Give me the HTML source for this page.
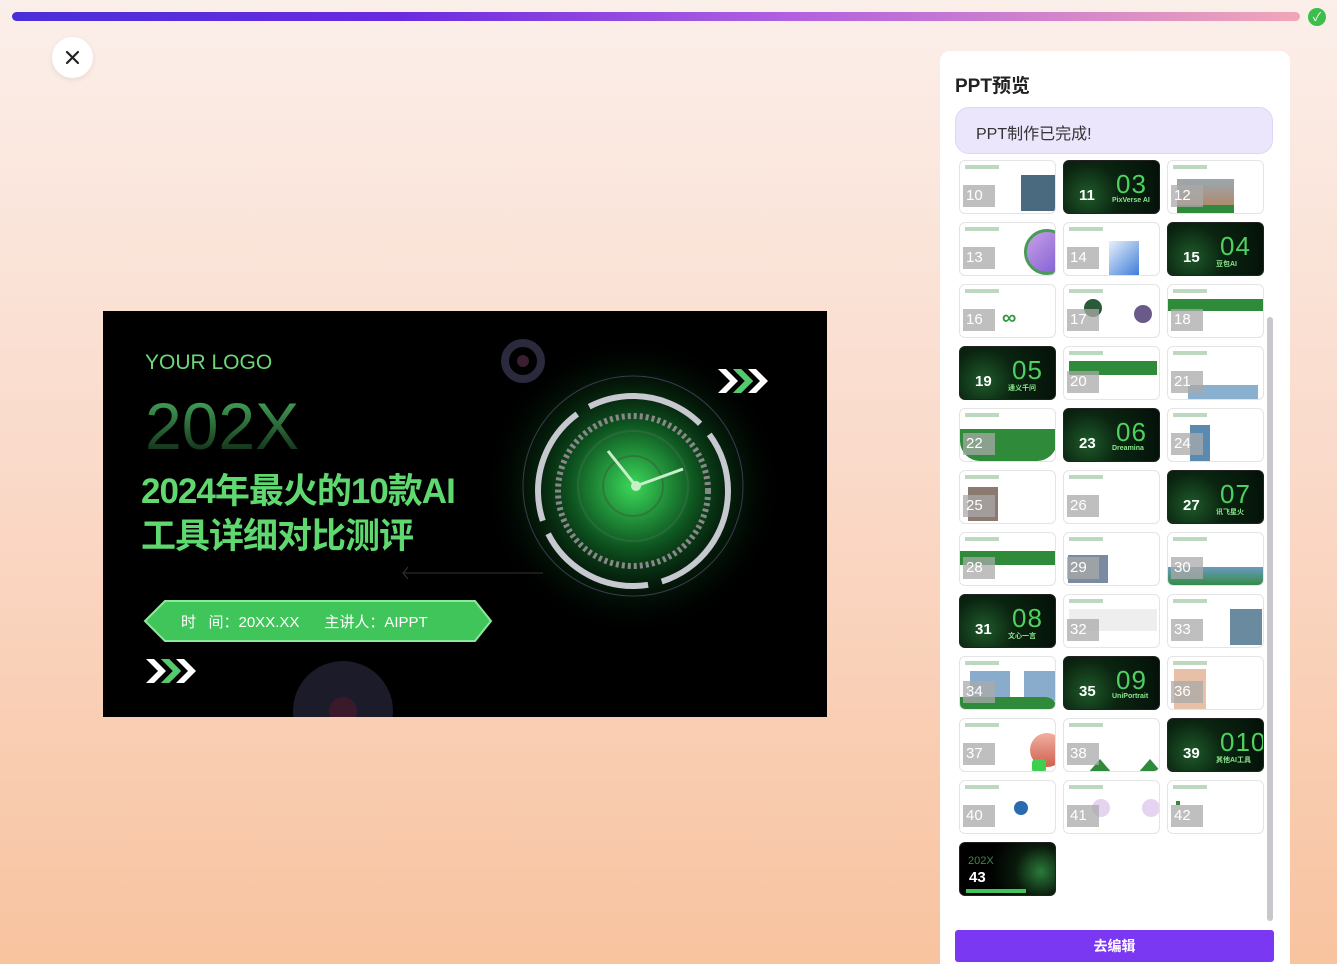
<!DOCTYPE html>
<html style="width:1337px;height:964px;overflow:hidden"><head><meta charset="utf-8"><style>
*{margin:0;padding:0;box-sizing:border-box}
html{background:linear-gradient(180deg,#fbefea 0%,#fad9c8 50%,#f8c39f 100%)}
body{width:1337px;height:964px;overflow:hidden;position:relative;font-family:"Liberation Sans","Noto Sans CJK SC",sans-serif;background:linear-gradient(180deg,#fbefea 0%,#fad9c8 50%,#f8c39f 100%)}
.bar{position:absolute;left:12px;top:12px;width:1288px;height:9px;border-radius:5px;background:linear-gradient(90deg,#4a2fd8 0%,#6a2be0 30%,#b060e0 60%,#f0a6b8 100%)}
.ok{position:absolute;left:1308px;top:8px;width:18px;height:18px;border-radius:50%;background:#3bbf4a;color:#fff;font-size:12px;text-align:center;line-height:18px}
.close{position:absolute;left:52px;top:37px;width:41px;height:41px;border-radius:50%;background:#fff;box-shadow:0 2px 6px rgba(0,0,0,.08)}
.slide{position:absolute;left:103px;top:311px;width:724px;height:406px;background:#000;overflow:hidden}
.panel{position:absolute;left:940px;top:51px;width:350px;height:913px;background:#fff;border-radius:10px 10px 0 0}
.title{position:absolute;left:955px;top:71px;font-size:19px;font-weight:bold;color:#222}
.msg{position:absolute;left:955px;top:107px;width:318px;height:47px;border-radius:14px;background:#ebe6fc;border:1px solid #ddd6f5;font-size:16px;color:#333;padding:12px 0 0 20px}
.grid{position:absolute;left:955px;top:158px;width:313px;height:765px;overflow:hidden}
.t{position:absolute;width:97px;height:54px;border-radius:6px;border:1px solid #e4e4e4;background:#fff;overflow:hidden}
.t .h{position:absolute;left:5px;top:4px;width:34px;height:4px;background:#bcd8bf}
.t .n{position:absolute;left:3px;top:24px;width:32px;height:22px;background:rgba(170,170,170,.75);color:#fff;font-size:15px;line-height:22px;padding-left:3px}
.t.d{background:radial-gradient(circle at 25% 65%,#1f5a2a 0,#0a2410 40%,#041008 100%);border-color:#222}
.t.d .n{background:none;color:#fff;left:12px;font-weight:bold}
.t .big{position:absolute;left:52px;top:10px;color:#4fd060;font-size:26px;line-height:26px;letter-spacing:1px}
.t .sub{position:absolute;left:48px;top:36px;color:#8be88f;font-size:7px;font-weight:bold}
.sb{position:absolute;left:1267px;top:317px;width:6px;height:604px;border-radius:3px;background:#c8c8cc}
.btn{position:absolute;left:955px;top:930px;width:319px;height:32px;border-radius:3px;background:#7a38f2;color:#fff;text-align:center;line-height:32px;font-size:14px;font-weight:bold}
</style></head><body>
<div class="bar"></div><div class="ok">✓</div>
<div class="close"><svg width="41" height="41"><path d="M15 15L26 26M26 15L15 26" stroke="#222" stroke-width="2.2" stroke-linecap="round"/></svg></div>
<div class="slide">
<svg width="724" height="406" style="position:absolute;left:0;top:0">
<defs><radialGradient id="g" cx="0.5" cy="0.5" r="0.5"><stop offset="0" stop-color="#3bd85a"/><stop offset="0.4" stop-color="#0f5a22"/><stop offset="1" stop-color="#000" stop-opacity="0"/></radialGradient>
<linearGradient id="y" x1="0" y1="0" x2="0" y2="1"><stop offset="0" stop-color="#4cb864"/><stop offset="1" stop-color="#0a1a0c"/></linearGradient></defs>
<circle cx="420" cy="50" r="18" fill="none" stroke="#2a2a3c" stroke-width="8"/><circle cx="420" cy="50" r="6" fill="#3a1f30"/>
<circle cx="240" cy="400" r="50" fill="#1b1b2a"/><circle cx="240" cy="400" r="14" fill="#3a1a2a"/>
<circle cx="530" cy="175" r="150" fill="url(#g)"/>
<circle cx="530" cy="175" r="110" fill="none" stroke="#3a3a50" stroke-width="1"/>
<circle cx="530" cy="180" r="95" fill="none" stroke="#c8c8d0" stroke-width="6" stroke-dasharray="120 14"/>
<circle cx="530" cy="180" r="75" fill="none" stroke="#888" stroke-width="6" stroke-dasharray="3 3"/>
<circle cx="530" cy="175" r="55" fill="none" stroke="#2a6a3a" stroke-width="2"/>
<circle cx="530" cy="175" r="30" fill="none" stroke="#2f7a3a" stroke-width="2"/>
<path d="M533 175L505 140M533 175L580 158" stroke="#c8f0c8" stroke-width="3"/>
<circle cx="533" cy="175" r="5" fill="#c8f0c8"/>
<path d="M300 262H440M305 256l-5 6 5 6" stroke="#333" fill="none"/>
<path d="M615 58l12 12-12 12h8l12-12-12-12zM630 58l12 12-12 12h8l12-12-12-12zM645 58l12 12-12 12h8l12-12-12-12z" fill="#fff"/>
<path d="M630 58l12 12-12 12h8l12-12-12-12z" fill="#52cc6a"/>
<path d="M43 348l12 12-12 12h8l12-12-12-12zM58 348l12 12-12 12h8l12-12-12-12zM73 348l12 12-12 12h8l12-12-12-12z" fill="#fff"/>
<path d="M58 348l12 12-12 12h8l12-12-12-12z" fill="#52cc6a"/>
<path d="M42 310l20-20h310l16 20-16 20H62z" fill="#3fc55a" stroke="#8ee89a" stroke-width="2"/>
<text x="42" y="58" fill="#6ed77c" font-size="21" font-family="Liberation Sans,sans-serif">YOUR LOGO</text>
<text x="42" y="138" fill="url(#y)" font-size="66" font-family="Liberation Sans,sans-serif">202X</text>
</svg>
<div style="position:absolute;left:38px;top:158px;color:#5fd870;font-size:35px;font-weight:bold;line-height:45px;letter-spacing:-1px">2024年最火的10款AI<br>工具详细对比测评</div>
<div style="position:absolute;left:78px;top:300px;color:#fff;font-size:15px">时&nbsp;&nbsp;&nbsp;间：20XX.XX&nbsp;&nbsp;&nbsp;&nbsp;&nbsp;&nbsp;主讲人：AIPPT</div>
</div>
<div class="panel"></div>
<div class="title">PPT预览</div>
<div class="msg">PPT制作已完成!</div>
<div class="grid">
<div class="t" style="left:4px;top:2px"><div class="h"></div><div style="position:absolute;right:0;top:14px;width:34px;height:36px;background:#4a6a80"></div><div class="n">10</div></div>
<div class="t d" style="left:108px;top:2px"><div class="n">11</div><div class="big">03</div><div class="sub">PixVerse AI</div></div>
<div class="t" style="left:212px;top:2px"><div class="h"></div><div style="position:absolute;left:9px;top:18px;width:57px;height:26px;background:linear-gradient(#9aa8b0,#b08a70)"></div><div style="position:absolute;left:9px;top:44px;width:57px;height:8px;background:#2f8a3a"></div><div class="n">12</div></div>
<div class="t" style="left:4px;top:64px"><div class="h"></div><div style="position:absolute;left:64px;top:6px;width:46px;height:46px;border-radius:50%;background:linear-gradient(135deg,#c7a0e8,#7a5ad0);border:3px solid #4a9a5a"></div><div class="n">13</div></div>
<div class="t" style="left:108px;top:64px"><div class="h"></div><div style="position:absolute;left:45px;top:18px;width:30px;height:36px;background:linear-gradient(135deg,#e8f0fa,#3a7ad8)"></div><div class="n">14</div></div>
<div class="t d" style="left:212px;top:64px"><div class="n">15</div><div class="big">04</div><div class="sub">豆包AI</div></div>
<div class="t" style="left:4px;top:126px"><div class="h"></div><div style="position:absolute;left:42px;top:22px;font-size:20px;color:#2a9a3a;font-weight:bold">∞</div><div class="n">16</div></div>
<div class="t" style="left:108px;top:126px"><div class="h"></div><div style="position:absolute;left:20px;top:14px;width:18px;height:18px;border-radius:50%;background:#2a5a3a"></div><div style="position:absolute;left:70px;top:20px;width:18px;height:18px;border-radius:50%;background:#6a5a8a"></div><div class="n">17</div></div>
<div class="t" style="left:212px;top:126px"><div class="h"></div><div style="position:absolute;left:0;top:14px;width:97px;height:12px;background:#2f8a3a"></div><div class="n">18</div></div>
<div class="t d" style="left:4px;top:188px"><div class="n">19</div><div class="big">05</div><div class="sub">通义千问</div></div>
<div class="t" style="left:108px;top:188px"><div class="h"></div><div style="position:absolute;left:5px;top:14px;width:88px;height:14px;background:#2f8a3a"></div><div class="n">20</div></div>
<div class="t" style="left:212px;top:188px"><div class="h"></div><div style="position:absolute;left:20px;top:38px;width:70px;height:14px;background:#8ab0d0"></div><div class="n">21</div></div>
<div class="t" style="left:4px;top:250px"><div class="h"></div><div style="position:absolute;left:0;top:20px;width:97px;height:32px;background:#2f8a3a;border-radius:0 0 20px 20px"></div><div class="n">22</div></div>
<div class="t d" style="left:108px;top:250px"><div class="n">23</div><div class="big">06</div><div class="sub">Dreamina</div></div>
<div class="t" style="left:212px;top:250px"><div class="h"></div><div style="position:absolute;left:22px;top:16px;width:20px;height:36px;background:#5a8ab0"></div><div class="n">24</div></div>
<div class="t" style="left:4px;top:312px"><div class="h"></div><div style="position:absolute;left:8px;top:16px;width:30px;height:34px;background:#8a7a70"></div><div class="n">25</div></div>
<div class="t" style="left:108px;top:312px"><div class="h"></div><div class="n">26</div></div>
<div class="t d" style="left:212px;top:312px"><div class="n">27</div><div class="big">07</div><div class="sub">讯飞星火</div></div>
<div class="t" style="left:4px;top:374px"><div class="h"></div><div style="position:absolute;left:0;top:18px;width:97px;height:14px;background:#2f8a3a"></div><div class="n">28</div></div>
<div class="t" style="left:108px;top:374px"><div class="h"></div><div style="position:absolute;left:4px;top:22px;width:40px;height:28px;background:#7a8aa0"></div><div class="n">29</div></div>
<div class="t" style="left:212px;top:374px"><div class="h"></div><div style="position:absolute;left:0;top:34px;width:97px;height:20px;background:linear-gradient(#6a9ac0,#2f8a3a)"></div><div class="n">30</div></div>
<div class="t d" style="left:4px;top:436px"><div class="n">31</div><div class="big">08</div><div class="sub">文心一言</div></div>
<div class="t" style="left:108px;top:436px"><div class="h"></div><div style="position:absolute;left:5px;top:14px;width:88px;height:22px;background:#eee"></div><div class="n">32</div></div>
<div class="t" style="left:212px;top:436px"><div class="h"></div><div style="position:absolute;left:62px;top:14px;width:32px;height:36px;background:#6a8aa0"></div><div class="n">33</div></div>
<div class="t" style="left:4px;top:498px"><div class="h"></div><div style="position:absolute;left:10px;top:14px;width:40px;height:30px;background:#8aaccc"></div><div style="position:absolute;left:64px;top:14px;width:33px;height:30px;background:#8aaccc"></div><div style="position:absolute;left:0;top:40px;width:97px;height:14px;background:#2f8a3a;border-radius:0 12px 0 0"></div><div class="n">34</div></div>
<div class="t d" style="left:108px;top:498px"><div class="n">35</div><div class="big">09</div><div class="sub">UniPortrait</div></div>
<div class="t" style="left:212px;top:498px"><div class="h"></div><div style="position:absolute;left:6px;top:12px;width:32px;height:42px;background:#e8c0a8"></div><div class="n">36</div></div>
<div class="t" style="left:4px;top:560px"><div class="h"></div><div style="position:absolute;left:70px;top:14px;width:34px;height:34px;border-radius:50%;background:linear-gradient(#f0b0a0,#d06050)"></div><div style="position:absolute;left:72px;top:40px;width:14px;height:14px;border-radius:4px;background:#3cd050"></div><div class="n">37</div></div>
<div class="t" style="left:108px;top:560px"><div class="h"></div><div style="position:absolute;left:24px;top:40px;border-left:12px solid transparent;border-right:12px solid transparent;border-bottom:14px solid #2f8a3a"></div><div style="position:absolute;left:74px;top:40px;border-left:12px solid transparent;border-right:12px solid transparent;border-bottom:14px solid #2f8a3a"></div><div class="n">38</div></div>
<div class="t d" style="left:212px;top:560px"><div class="n">39</div><div class="big">010</div><div class="sub">其他AI工具</div></div>
<div class="t" style="left:4px;top:622px"><div class="h"></div><div style="position:absolute;left:54px;top:20px;width:14px;height:14px;border-radius:50%;background:#2a6ab0"></div><div class="n">40</div></div>
<div class="t" style="left:108px;top:622px"><div class="h"></div><div style="position:absolute;left:28px;top:18px;width:18px;height:18px;border-radius:50%;background:#e4d4f0"></div><div style="position:absolute;left:78px;top:18px;width:18px;height:18px;border-radius:50%;background:#e4d4f0"></div><div class="n">41</div></div>
<div class="t" style="left:212px;top:622px"><div class="h"></div><div style="position:absolute;left:8px;top:20px;width:4px;height:4px;background:#2f8a3a"></div><div class="n">42</div></div>
<div class="t d" style="left:4px;top:684px;background:radial-gradient(circle at 85% 55%,#2a7a3a 0,#0a1a0c 30%,#000 60%)"><div class="n" style="left:6px">43</div><div style="position:absolute;left:8px;top:12px;color:#3a8a4a;font-size:11px">202X</div><div style="position:absolute;left:6px;top:46px;width:60px;height:4px;background:#3fc55a"></div></div>
</div>
<div class="sb"></div>
<div class="btn">去编辑</div>
</body></html>
